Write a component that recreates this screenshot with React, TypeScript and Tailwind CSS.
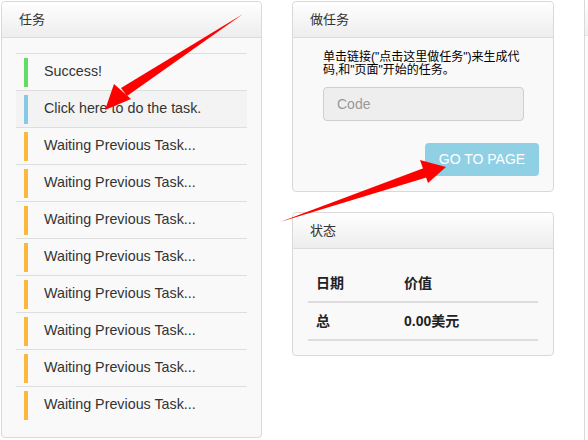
const font = { fontFamily: '"Liberation Sans", Arial, "Noto Sans CJK SC", sans-serif' };

type Task = { label: string; color: string; active?: boolean };

const tasks: Task[] = [
  { label: 'Success!', color: 'bg-[#62dc62]' },
  { label: 'Click here to do the task.', color: 'bg-[#87c8e6]', active: true },
  ...Array.from({ length: 8 }, () => ({ label: 'Waiting Previous Task...', color: 'bg-[#fbb83c]' })),
];

function PanelHeader({ title }: { title: string }) {
  return (
    <div className="h-[36px] shrink-0 flex items-center px-[17px] border-b border-[#dcdcdc] bg-gradient-to-b from-white to-[#ededed] rounded-t-[4px] text-[13px] text-[#333]">
      {title}
    </div>
  );
}

export default function App() {
  return (
    <div className="relative w-[588px] h-[440px] bg-white overflow-hidden flex items-start" style={font}>
      {/* tasks */}
      <div className="shrink-0 ml-[1px] mt-[1px] w-[261px] h-[437px] flex flex-col border border-[#d9d9d9] rounded-[4px] bg-[#f9f9f9]">
        <PanelHeader title="任务" />
        <div className="mx-[14px] mt-[15px]">
          {tasks.map((t, i) => (
            <div
              key={i}
              className={`h-[37px] flex items-center border-t border-[#dedede] ${t.active ? 'bg-[#f3f3f3]' : ''}`}
            >
              <div className={`ml-[8px] w-[4px] h-[29px] ${t.color}`} />
              <span className="ml-[16px] text-[14.3px] text-[#333]">{t.label}</span>
            </div>
          ))}
        </div>
      </div>

      {/* right column */}
      <div className="shrink-0 ml-[30px] mt-[1px] w-[262px] flex flex-col gap-[20px]">
        <div className="h-[191px] flex flex-col border border-[#d9d9d9] rounded-[4px] bg-[#f9f9f9]">
          <PanelHeader title="做任务" />
          <div className="px-[30px] pt-[13px] flex flex-col">
            <p className="text-[12px] leading-[13px] text-black w-[200px]">
              单击链接("点击这里做任务")来生成代码,和"页面"开始的任务。
            </p>
            <div className="mt-[10px] w-[201px] h-[34px] rounded-[4px] border border-[#cfcfcf] bg-[#eeeeee] flex items-center px-[13px] text-[14px] text-[#999]">
              Code
            </div>
            <div className="mt-[22px] self-end -mr-[16px] w-[114px] h-[33px] rounded-[4px] bg-[#8fd0e5] flex items-center justify-center text-[14px] text-white">
              GO TO PAGE
            </div>
          </div>
        </div>

        <div className="h-[144px] flex flex-col border border-[#d9d9d9] rounded-[4px] bg-[#f9f9f9]">
          <PanelHeader title="状态" />
          <div className="mx-[15px] mt-[17px] text-[14px] font-bold text-[#222]">
            <div className="h-[37px] flex items-center border-b-2 border-[#dddddd]">
              <span className="ml-[8px] w-[88px]">日期</span>
              <span>价值</span>
            </div>
            <div className="h-[38px] flex items-center border-b-2 border-[#dddddd]">
              <span className="ml-[8px] w-[88px]">总</span>
              <span>0.00美元</span>
            </div>
          </div>
        </div>
      </div>

      {/* next panel, cut off */}
      <div className="shrink-0 ml-[30px] mt-0 w-[40px] h-[440px] border-l border-[#d9d9d9] bg-[#fbfbfb]">
        <div className="h-[36px] border-b border-[#e4e4e4] bg-gradient-to-b from-white to-[#f0f0f0]" />
      </div>

      {/* annotation arrows */}
      <svg className="absolute inset-0 pointer-events-none" width="588" height="440">
        <polygon points="243,14 121,88 127,96" fill="#ff0000" />
        <polygon points="105,110 114,84 131,99" fill="#ff0000" />
        <polygon points="280,222 424,168 428,177" fill="#ff0000" />
        <polygon points="446,167 420,160 428,183" fill="#ff0000" />
      </svg>
    </div>
  );
}
